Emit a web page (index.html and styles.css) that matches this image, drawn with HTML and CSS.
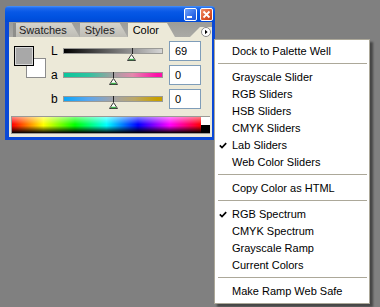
FILE: index.html
```html
<!DOCTYPE html>
<html lang="en">
<head>
    <meta charset="UTF-8">
    <title>Color Palette</title>
    <link rel="stylesheet" href="styles.css">
</head>
<body>
    <div class="window">
        <div class="titlebar">
            <span class="tbtn min"><i></i></span>
            <span class="tbtn close">
                <svg width="13" height="13" viewBox="0 0 13 13"><path d="M3.5 3.5 L9.5 9.5 M9.5 3.5 L3.5 9.5" stroke="#fff" stroke-width="1.8" fill="none"/></svg>
            </span>
        </div>
        <div class="frame">
            <div class="tabstrip">
                <span class="tab">Swatches</span>
                <span class="tab">Styles</span>
                <span class="tab active">Color</span>
                <span class="well">
                    <span class="flyout">
                        <svg width="10" height="10" viewBox="0 0 10 10"><circle cx="5" cy="5" r="4.5" fill="#fff" stroke="#8a8a8a"/><path d="M4 2.8 L6.6 5 L4 7.2 Z" fill="#000"/></svg>
                    </span>
                </span>
            </div>
            <div class="panel">
                <div class="top">
                    <div class="swatches">
                        <span class="fg"></span>
                        <span class="bg"></span>
                    </div>
                    <div class="sliders">
                        <div class="row">
                            <span class="lbl">L</span>
                            <div class="track">
                                <div class="bar bar-l"><i style="left:68px"></i></div>
                                <svg class="thumb" style="margin-left:64px" width="9" height="7" viewBox="0 0 9 7"><path d="M4.5 0.5 L8.5 6.5 L0.5 6.5 Z" fill="#fff" stroke="#3a3a3a"/><path d="M2 5.5 L7 5.5" stroke="#3fae4a" stroke-width="1.4"/></svg>
                            </div>
                            <span class="val">69</span>
                        </div>
                        <div class="row">
                            <span class="lbl">a</span>
                            <div class="track">
                                <div class="bar bar-a"><i style="left:49px"></i></div>
                                <svg class="thumb" style="margin-left:46px" width="9" height="7" viewBox="0 0 9 7"><path d="M4.5 0.5 L8.5 6.5 L0.5 6.5 Z" fill="#fff" stroke="#3a3a3a"/><path d="M2 5.5 L7 5.5" stroke="#3fae4a" stroke-width="1.4"/></svg>
                            </div>
                            <span class="val">0</span>
                        </div>
                        <div class="row">
                            <span class="lbl">b</span>
                            <div class="track">
                                <div class="bar bar-b"><i style="left:49px"></i></div>
                                <svg class="thumb" style="margin-left:46px" width="9" height="7" viewBox="0 0 9 7"><path d="M4.5 0.5 L8.5 6.5 L0.5 6.5 Z" fill="#fff" stroke="#3a3a3a"/><path d="M2 5.5 L7 5.5" stroke="#3fae4a" stroke-width="1.4"/></svg>
                            </div>
                            <span class="val">0</span>
                        </div>
                    </div>
                </div>
                <div class="spectrum">
                    <div class="hues"></div>
                    <div class="bw"></div>
                </div>
            </div>
        </div>
    </div>

    <ul class="menu">
        <li><span class="mark"></span>Dock to Palette Well</li>
        <li class="sep"></li>
        <li><span class="mark"></span>Grayscale Slider</li>
        <li><span class="mark"></span>RGB Sliders</li>
        <li><span class="mark"></span>HSB Sliders</li>
        <li><span class="mark"></span>CMYK Sliders</li>
        <li><span class="mark"><svg width="8" height="7" viewBox="0 0 8 7"><path d="M0.8 3.4 L3 5.6 L7.2 1.2" stroke="#000" stroke-width="1.7" fill="none"/></svg></span>Lab Sliders</li>
        <li><span class="mark"></span>Web Color Sliders</li>
        <li class="sep"></li>
        <li><span class="mark"></span>Copy Color as HTML</li>
        <li class="sep"></li>
        <li><span class="mark"><svg width="8" height="7" viewBox="0 0 8 7"><path d="M0.8 3.4 L3 5.6 L7.2 1.2" stroke="#000" stroke-width="1.7" fill="none"/></svg></span>RGB Spectrum</li>
        <li><span class="mark"></span>CMYK Spectrum</li>
        <li><span class="mark"></span>Grayscale Ramp</li>
        <li><span class="mark"></span>Current Colors</li>
        <li class="sep"></li>
        <li><span class="mark"></span>Make Ramp Web Safe</li>
    </ul>
</body>
</html>
```

FILE: styles.css
```css
body {
    margin: 0;
    height: 307px;
    background: #808080;
    font-family: 'Liberation Sans', Arial, sans-serif;
    font-size: 11px;
    color: #000;
    overflow: hidden;
}

/* palette window */
.window {
    width: 210px;
    margin: 6px 0 0 5px;
}
.titlebar {
    height: 16px;
    box-sizing: border-box;
    padding: 2px 2px 0 0;
    display: flex;
    justify-content: flex-end;
    gap: 3px;
    border-radius: 4px 4px 0 0;
    background: linear-gradient(#4a93f8 0, #1d69ec 2px, #0758e6 6px, #0052e0 11px, #0049d6 100%);
}
.tbtn {
    width: 13px;
    height: 13px;
    box-sizing: border-box;
    border: 1px solid #fff;
    border-radius: 2px;
    position: relative;
}
.tbtn svg {
    position: absolute;
    left: -1px;
    top: -1px;
}
.min {
    background: linear-gradient(135deg, #6fa3fb, #2865e6 70%, #1d55d8);
}
.min i {
    position: absolute;
    left: 2px;
    top: 7px;
    width: 5px;
    height: 2px;
    background: #fff;
}
.close {
    background: linear-gradient(135deg, #f0906a, #dc5328 60%, #c23d16);
}
.frame {
    border: solid #0a48d6;
    border-width: 0 3px 3px 4px;
    background: #ece9d8;
}

/* tabs */
.tabstrip {
    height: 15px;
    display: flex;
    align-items: flex-end;
    padding-left: 4px;
    background: linear-gradient(#9c9c98, #aaaaa6);
}
.tab {
    height: 14px;
    line-height: 14px;
    padding: 0 13px 0 6px;
    color: #222;
    background: linear-gradient(#d4d3cc, #bdbcb5);
    clip-path: polygon(0 0, calc(100% - 8px) 0, 100% 100%, 0 100%);
    box-shadow: inset 3px 0 0 #8e8e8a;
}
.tab + .tab {
    box-shadow: none;
    padding-left: 5px;
}
.tab.active {
    color: #000;
    background: #ece9d8;
    padding-right: 16px;
}
.well {
    margin-left: auto;
    width: 22px;
    height: 10px;
    display: flex;
    justify-content: flex-end;
    align-items: center;
    background: #ece9d8;
    clip-path: polygon(10px 0, 100% 0, 100% 100%, 0 100%);
}
.flyout {
    display: flex;
    margin-right: 1px;
}

/* slider area */
.panel {
    padding: 4px 2px 3px;
}
.top {
    display: flex;
    align-items: flex-start;
}
.swatches {
    display: grid;
    margin: 5px 0 0 3px;
}
.swatches span {
    grid-area: 1 / 1;
    width: 20px;
    height: 20px;
    box-sizing: border-box;
}
.fg {
    border: 1px solid #000;
    background: #a8a8a8;
    box-shadow: inset 0 0 0 1px #d8d8d8;
    position: relative;
    z-index: 1;
}
.bg {
    margin: 12px 0 0 12px;
    border: 1px solid #8c8c8c;
    background: #fff;
}
.sliders {
    margin-left: 3px;
    display: flex;
    flex-direction: column;
    gap: 4px;
}
.row {
    height: 20px;
    display: flex;
    align-items: flex-start;
}
.lbl {
    width: 14px;
    box-sizing: border-box;
    padding-left: 2px;
    margin-top: 4px;
    line-height: 12px;
    font-size: 12px;
}
.track {
    width: 100px;
    padding-top: 7px;
}
.bar {
    height: 6px;
    box-sizing: border-box;
    border: 1px solid #9a9a96;
    position: relative;
}
.bar i {
    position: absolute;
    top: -1px;
    bottom: -1px;
    width: 1px;
    background: #222;
}
.bar-l {
    background: linear-gradient(to right, #000, #d6d6d6);
}
.bar-a {
    background: linear-gradient(to right, #0ac79c, #2ec3a0 25%, #a1a1a1 50%, #e488ac 70%, #ff0fa8 95%);
}
.bar-b {
    background: linear-gradient(to right, #0aa6f8, #5aa6ee 25%, #a3a3a8 50%, #bca868 72%, #c8a000 95%);
}
.thumb {
    display: block;
}
.val {
    margin-left: 6px;
    width: 32px;
    height: 20px;
    box-sizing: border-box;
    border: 1px solid #7f9db9;
    background: #fff;
    padding-left: 5px;
    line-height: 18px;
}

/* spectrum */
.spectrum {
    margin: 7px 0 0;
    height: 16px;
    display: flex;
    border: 1px solid #9a9a96;
    border-right-width: 0;
}
.hues {
    flex: 1;
    background:
        linear-gradient(rgba(255, 255, 255, 0.5), rgba(255, 255, 255, 0) 45%, rgba(0, 0, 0, 0) 55%, #000),
        linear-gradient(to right, #f00, #ff0, #0f0, #0ff, #00f, #f0f, #f00);
}
.bw {
    width: 9px;
    background: linear-gradient(#fff 50%, #000 50%);
}

/* fly-out menu */
.menu {
    position: absolute;
    left: 214px;
    top: 39px;
    width: 156px;
    box-sizing: border-box;
    margin: 0;
    padding: 3px 0;
    list-style: none;
    background: #fff;
    border: 1px solid #aca899;
    box-shadow: 3px 3px 2px rgba(0, 0, 0, 0.45);
}
.menu li {
    height: 17px;
    line-height: 17px;
    display: flex;
    white-space: nowrap;
}
.mark {
    width: 17px;
    display: flex;
    align-items: center;
    padding-left: 4px;
    box-sizing: border-box;
}
.menu .sep {
    height: 1px;
    margin: 3px 2px 5px 3px;
    background: #aca899;
}
```
